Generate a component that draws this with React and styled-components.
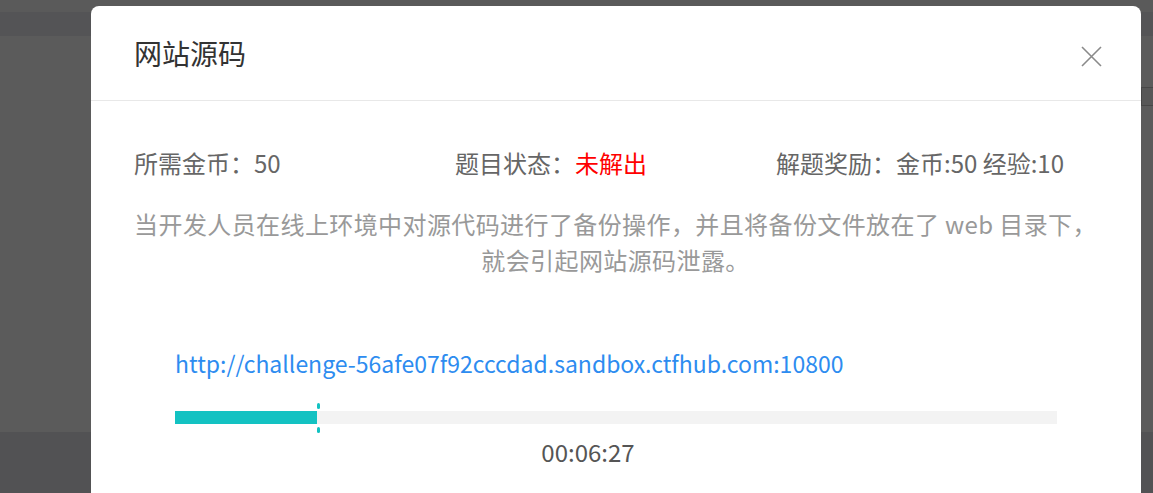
import React from "react";
import styled, { createGlobalStyle } from "styled-components";

const GlobalStyle = createGlobalStyle`
  html, body {
    margin: 0;
    padding: 0;
    height: 100%;
    overflow: hidden;
    font-family: "Noto Sans CJK SC", "Noto Sans", sans-serif;
  }
`;

const Backdrop = styled.div`
  position: relative;
  width: 1153px;
  height: 493px;
  display: flex;
  flex-direction: column;
  background: #5b5b5b;
  overflow: hidden;
`;

const Band = styled.div`
  height: ${(p) => p.h}px;
  flex: ${(p) => (p.grow ? 1 : "none")};
  background: ${(p) => p.bg};
`;

const SideBox = styled.div`
  position: absolute;
  left: 1141px;
  top: 87px;
  width: 20px;
  height: 17px;
  border: 1px solid #474747;
  background: #575757;
`;

const Modal = styled.div`
  position: absolute;
  left: 91px;
  top: 6px;
  width: 1050px;
  height: 540px;
  background: #fff;
  border-radius: 8px;
  display: flex;
  flex-direction: column;
`;

const Header = styled.div`
  height: 94px;
  border-bottom: 1px solid #e8e8e8;
  display: flex;
  align-items: center;
  justify-content: space-between;
  padding: 0 38px 0 43px;
`;

const Title = styled.h2`
  margin: 0;
  font-size: 28px;
  font-weight: 400;
  color: #333;
`;

const CloseBtn = styled.button`
  width: 24px;
  height: 24px;
  margin-top: 6px;
  padding: 0;
  border: none;
  background: none;
  display: flex;
  align-items: center;
  justify-content: center;
  cursor: pointer;
`;

const Body = styled.div`
  padding: 41px 44px 0 43px;
  display: flex;
  flex-direction: column;
`;

const InfoRow = styled.div`
  display: grid;
  grid-template-columns: repeat(3, 1fr);
  font-size: 24px;
  line-height: 42px;
  color: #666;
`;

const Status = styled.span`
  color: #ff0000;
`;

const Desc = styled.p`
  margin: 22px 0 0;
  font-size: 24px;
  line-height: 36px;
  letter-spacing: 0.4px;
  color: #999;
  text-align: center;
`;

const Target = styled.div`
  padding: 69px 40px 0 41px;
  display: flex;
  flex-direction: column;
`;

const Link = styled.a`
  font-size: 23px;
  line-height: 32px;
  color: #2d8cf0;
  text-decoration: none;
`;

const Track = styled.div`
  position: relative;
  margin-top: 32px;
  height: 13px;
  background: #f3f3f3;
`;

const Fill = styled.div`
  height: 100%;
  background: #13c2c2;
`;

const Tick = styled.span`
  position: absolute;
  left: ${(p) => p.at}px;
  top: ${(p) => (p.below ? 16 : -8)}px;
  width: 3px;
  height: 6px;
  border-radius: 2px;
  background: #13c2c2;
`;

const Timer = styled.div`
  margin-top: 12px;
  padding-right: 56px;
  text-align: center;
  font-size: 24px;
  line-height: 32px;
  color: #555;
`;

export default function App() {
  const progress = 142;
  return (
    <>
      <GlobalStyle />
      <Backdrop>
        <Band h={12} bg="#5a5a5a" />
        <Band h={24} bg="#545456" />
        <Band grow bg="#5b5b5b" />
        <Band h={61} bg="#525254" />
        <SideBox />
        <Modal>
          <Header>
            <Title>网站源码</Title>
            <CloseBtn aria-label="close">
              <svg width="21" height="21" viewBox="0 0 21 21">
                <path d="M1 1L20 20M20 1L1 20" stroke="#8a8a8a" strokeWidth="1.6" fill="none" />
              </svg>
            </CloseBtn>
          </Header>
          <Body>
            <InfoRow>
              <span>所需金币：50</span>
              <span>
                题目状态：<Status>未解出</Status>
              </span>
              <span>解题奖励：金币:50 经验:10</span>
            </InfoRow>
            <Desc>
              当开发人员在线上环境中对源代码进行了备份操作，并且将备份文件放在了 web 目录下，
              <br />
              就会引起网站源码泄露。
            </Desc>
            <Target>
              <Link href="#">http://challenge-56afe07f92cccdad.sandbox.ctfhub.com:10800</Link>
              <Track>
                <Fill style={{ width: `${progress}px` }} />
                <Tick at={progress} />
                <Tick at={progress} below />
              </Track>
              <Timer>00:06:27</Timer>
            </Target>
          </Body>
        </Modal>
      </Backdrop>
    </>
  );
}
